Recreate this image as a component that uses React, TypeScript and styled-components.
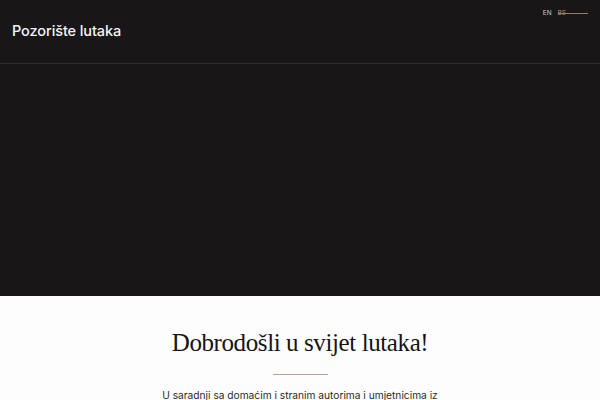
import React from "react";
import styled, { createGlobalStyle } from "styled-components";

const Global = createGlobalStyle`
  html, body { margin: 0; padding: 0; background: #fdfdfd; }
  body { font-family: "Inter", "Noto Sans", sans-serif; }
`;

const Hero = styled.section`
  background: #181617;
  height: 296px;
  display: flex;
  flex-direction: column;
`;

const Header = styled.header`
  height: 64px;
  border-bottom: 1px solid #2f2d2e;
  display: flex;
  justify-content: space-between;
  align-items: flex-start;
  padding: 0 12px;
  box-sizing: border-box;
`;

const Brand = styled.div`
  color: #f4f4f4;
  font-size: 14.5px;
  font-weight: 500;
  margin-top: 22px;
  letter-spacing: -0.1px;
`;

const Lang = styled.div`
  display: flex;
  align-items: center;
  gap: 6px;
  margin-top: 9px;
  margin-left: auto;
  font-size: 6.5px;
  color: #c9c6c2;
`;

const LangItem = styled.span<{ $active?: boolean }>`
  position: relative;
  padding-right: ${(p) => (p.$active ? "22px" : "0")};
  color: ${(p) => (p.$active ? "#a89474" : "#cfccc8")};
  &::after {
    content: "";
    display: ${(p) => (p.$active ? "block" : "none")};
    position: absolute;
    left: 0;
    right: 0;
    top: 50%;
    height: 1px;
    background: #8f7f64;
  }
`;

const Intro = styled.section`
  display: flex;
  flex-direction: column;
  align-items: center;
  padding-top: 30px;
`;

const Title = styled.h1`
  margin: 0;
  font-family: "Liberation Serif", serif;
  font-weight: 400;
  font-size: 25px;
  line-height: 34px;
  color: #161415;
  letter-spacing: -0.4px;
`;

const Divider = styled.div`
  width: 55px;
  height: 1px;
  background: #b5a689;
  margin-top: 14px;
`;

const Text = styled.p`
  margin: 12px 0 0;
  font-size: 10.2px;
  line-height: 16px;
  color: #2a2a2a;
`;

export default function App() {
  return (
    <>
      <Global />
      <Hero>
        <Header>
          <Brand>Pozorište lutaka</Brand>
          <Lang>
            <LangItem>EN</LangItem>
            <LangItem $active>BS</LangItem>
          </Lang>
        </Header>
      </Hero>
      <Intro>
        <Title>Dobrodošli u svijet lutaka!</Title>
        <Divider />
        <Text>U saradnji sa domaćim i stranim autorima i umjetnicima iz</Text>
      </Intro>
    </>
  );
}
